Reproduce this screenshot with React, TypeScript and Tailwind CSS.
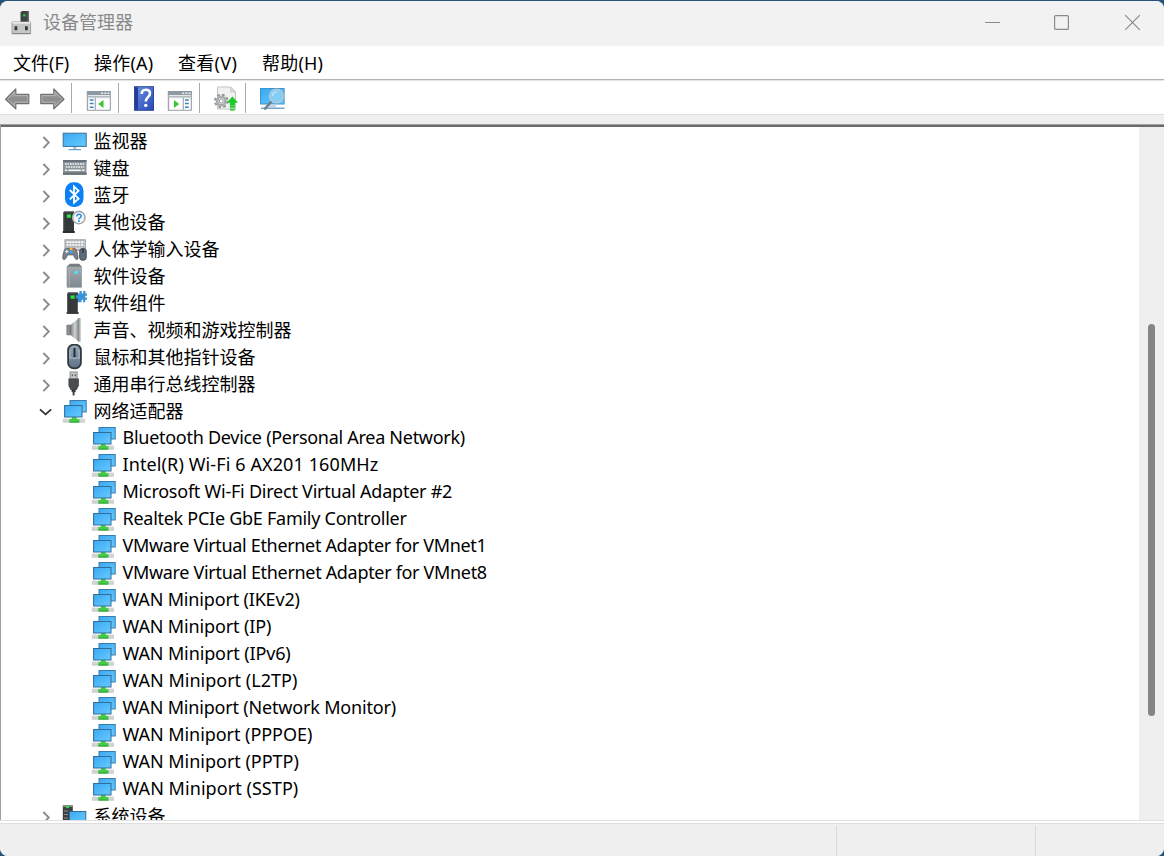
import React from "react";

type IconProps = { className?: string };

const Row = ({ children }: { children: React.ReactNode }) => (
  <svg width="26" height="27" viewBox="0 0 26 27" className="block shrink-0">
    {children}
  </svg>
);

const Defs = () => (
  <svg width="0" height="0" className="absolute">
    <defs>
      <linearGradient id="screen" x1="0" y1="0" x2="1" y2="1">
        <stop offset="0" stopColor="#3aa8f2" />
        <stop offset="1" stopColor="#66caff" />
      </linearGradient>
      <linearGradient id="steel" x1="0" y1="0" x2="0" y2="1">
        <stop offset="0" stopColor="#a9b0b4" />
        <stop offset="1" stopColor="#7d878d" />
      </linearGradient>
      <linearGradient id="arrow" x1="0" y1="0" x2="0" y2="1">
        <stop offset="0" stopColor="#b4b4b4" />
        <stop offset="0.5" stopColor="#8c8c8c" />
        <stop offset="1" stopColor="#a2a2a2" />
      </linearGradient>
      <linearGradient id="book" x1="0" y1="0" x2="1" y2="1">
        <stop offset="0" stopColor="#6f93e8" />
        <stop offset="1" stopColor="#2647b4" />
      </linearGradient>
      <linearGradient id="cone" x1="0" y1="0" x2="1" y2="0">
        <stop offset="0" stopColor="#6d7275" />
        <stop offset="0.55" stopColor="#cfd2d4" />
        <stop offset="1" stopColor="#8b9094" />
      </linearGradient>
      <linearGradient id="mouse" x1="0" y1="0" x2="0" y2="1">
        <stop offset="0" stopColor="#98a9b9" />
        <stop offset="1" stopColor="#5d7085" />
      </linearGradient>
    </defs>
  </svg>
);

const MonitorIcon = () => (
  <Row>
    <rect x="1.2" y="5.2" width="23" height="13.2" fill="url(#screen)" stroke="#3b6f98" />
    <path d="M11 19h3.5v2.2H11z" fill="#b7c4cd" />
    <path d="M6.5 21.7h12.5" stroke="#6ea5c8" strokeWidth="1.3" />
  </Row>
);

const KeyboardIcon = () => (
  <Row>
    <rect x="1" y="5" width="23.5" height="14.8" fill="#8b949a" />
    <path d="M1 5h23.5v2H1z" fill="#687178" />
    <path d="M1 17.6h23.5v2.2H1z" fill="#697177" />
    <path d="M3 9h19.5M3.8 12h18.4" stroke="#f5f6f6" strokeWidth="1.6" strokeDasharray="1.7 .8" />
    <path d="M3 15.2h2.2M6.4 15.2h12.5M20 15.2h2.5" stroke="#f5f6f6" strokeWidth="1.5" />
  </Row>
);

const BluetoothIcon = () => (
  <Row>
    <rect x="3" y="0.3" width="18.5" height="24.6" rx="8.5" fill="#0a82f5" />
    <path d="m7.8 8 8.8 8.6-4.6 4.1V4.6l4.6 4.1-8.8 8.6" fill="none" stroke="#fff" strokeWidth="1.8" />
  </Row>
);

const Tower = ({ x = 0 }: { x?: number }) => (
  <g transform={`translate(${x} 0)`}>
    <path d="M1.5 3.2 3 2h9v20.4H1.5z" fill="#36393b" />
    <path d="M1.5 3.2 3 2h9v1.2z" fill="#777b7d" />
    <path d="M1.7 3.4v18.8" stroke="#5b5f61" />
    <rect x="4.8" y="5.4" width="4" height="3.4" fill="#25e83a" />
    <path d="M.8 23h12" stroke="#2c2f30" strokeWidth="1.8" />
  </g>
);

const OtherIcon = () => (
  <Row>
    <Tower />
    <circle cx="16.8" cy="8.6" r="6.2" fill="#f5f8fa" stroke="#a3a9ad" strokeWidth="1.6" />
    <path d="M14.8 7.4c0-3 4.4-2.8 4.4-.3 0 1.9-2.3 1.6-2.3 3.4" fill="none" stroke="#2f8ed9" strokeWidth="1.6" />
    <rect x="16" y="11.4" width="1.8" height="1.6" fill="#2f8ed9" />
  </Row>
);

const HidIcon = () => (
  <Row>
    <rect x="2.9" y="3.7" width="20.6" height="10.8" fill="#b4b9bd" stroke="#9ba2a6" strokeWidth=".8" />
    <path d="M4.5 6.2h18M4.5 9h18" stroke="#fff" strokeWidth="1.7" strokeDasharray="2.1 .8" />
    <path d="M3.5 12.2h18" stroke="#e8eaec" />
    <path d="M4.4 12.3h7.9c2.7 0 3.9 8.2 3.7 10-.3 2.5-3 1.6-4.5-3.4H5.4c-1.3 5-4.1 5.8-4.6 3.4-.3-2 1.1-10 3.6-10z" fill="#75818b" stroke="#4b555e" strokeWidth=".7" />
    <path d="M3 15.5h3.6M4.8 13.7v3.6" stroke="#e3e7ea" strokeWidth="1.2" />
    <circle cx="9.2" cy="12.8" r="1.4" fill="#ffbd28" />
    <circle cx="11.8" cy="14.3" r="1.3" fill="#e26640" />
    <circle cx="9.2" cy="15.7" r="1.8" fill="#35a7ef" />
    <rect x="17.7" y="12.5" width="6.5" height="11.7" rx="2.6" fill="#5f6d7a" stroke="#424b53" />
    <path d="M21 13v4" stroke="#252c32" strokeWidth="1.2" />
  </Row>
);

const DeviceIcon = () => (
  <Row>
    <path d="M5 3.5 8 1h9l2.5 2.5v20.8H5z" fill="url(#steel)" stroke="#858d91" strokeWidth=".6" />
    <path d="M5 3.7 8 1h9l2.5 2.7z" fill="#747d82" />
    <path d="M7.3 4v20" stroke="#aeb6ba" strokeWidth=".8" />
    <path d="m14.3 7 2.1 2.2-2.1 2.3-2.2-2.3z" fill="#3ee7fa" />
  </Row>
);

const ComponentIcon = () => (
  <Row>
    <path d="M15 3.5h2.4V1h2.4v2.5h1.4V1h2.3v2.5H25v2.3h-1.8v1.6H25v2.4h-1.8v2.4h-2.1V9.8h-1.5v2.4H15z" fill="#3b93d5" />
    <Tower x={3.8} />
    <path d="M13.8 5.3h4v3.2h-4z" fill="#3b93d5" />
  </Row>
);

const SoundIcon = () => (
  <Row>
    <path d="M8 8.2 16.7 1.2v23.4L8 17.8z" fill="url(#cone)" />
    <path d="M4.9 8.2H8v9.6H4.9z" fill="#8d9295" stroke="#6c7174" strokeWidth=".8" />
    <path d="M16.4 1h2.2v23.8h-2.2z" fill="#a9aeb1" />
    <path d="M16.3 1.2v23.4" stroke="#7b8083" strokeWidth=".9" />
  </Row>
);

const MouseIcon = () => (
  <Row>
    <rect x="6.1" y="0.6" width="12.8" height="23.7" rx="5.6" fill="url(#mouse)" stroke="#33383d" strokeWidth="1.8" />
    <path d="M7.7 13.2c3 1.8 7 1.8 9.8 0M8 6v9M17.1 6v9" fill="none" stroke="#b7c5cf" strokeWidth=".8" />
    <path d="M12.5 4v9" stroke="#252a2e" strokeWidth="2" />
  </Row>
);

const UsbIcon = () => (
  <Row>
    <rect x="8.1" y="1" width="7" height="7" fill="#c9cccd" stroke="#85898b" />
    <path d="M9.7 3.3H11v2H9.7zM12.6 3.3h1.3v2h-1.3z" fill="#585c5e" />
    <path d="M6.4 7.5h10.5v7.2l-2.2 4.4H8.6l-2.2-4.4z" fill="#4a4d50" />
    <path d="M9.6 18.5h4v2.7h-4z" fill="#333638" />
    <path d="M11.6 20v4.4" stroke="#434648" strokeWidth="2" />
  </Row>
);

const NetworkIcon = () => (
  <Row>
    <rect x="8" y="2.5" width="16.2" height="11.5" fill="url(#screen)" stroke="#397baa" />
    <path d="M.8 20.6H23v3.9H.8z" fill="#d2d4d5" />
    <path d="M.8 24.1H23" stroke="#bfc1c2" strokeWidth=".6" />
    <path d="M10 18.5h4.6v2.3l2.9.4v3.4H7.2v-3.4l2.8-.4z" fill="#45cb45" />
    <path d="M7.5 24h9.7" stroke="#2f9f38" strokeWidth=".9" />
    <rect x="2.6" y="7.5" width="17.4" height="11.5" fill="url(#screen)" stroke="#306c9a" />
  </Row>
);

const SystemIcon = () => (
  <Row>
    <path d="M.8 2.3h10v20H.8z" fill="#3d4042" />
    <path d="M.8 2.3h10V4H.8z" fill="#8a8e90" />
    <path d="M4 3h3v2H4z" fill="#28df38" />
    <path d="M2 8h4M2 11.5h4M2 15h4" stroke="#8d9193" />
    <rect x="7.5" y="8.5" width="16.3" height="11" fill="url(#screen)" stroke="#356d98" />
  </Row>
);

const AppIcon = () => (
  <svg width="22" height="26" viewBox="0 0 22 26" className="block">
    <path d="M9.5 2.5 11 1h7v13H9.5z" fill="#3e4242" />
    <path d="M17.3 1v12" stroke="#686d6d" strokeWidth="1.5" />
    <rect x="12.2" y="4.2" width="2.2" height="2.2" fill="#33d442" />
    <path d="M1 12h18.6v11.8H1z" fill="#c5c6c6" stroke="#a1a3a3" />
    <path d="M1.3 12.9h18" stroke="#e6e6e6" strokeWidth="1.8" />
    <path d="M3.5 16.2h2.8v4H3.5zM14 16.2h2.8v4H14z" fill="#353939" />
    <path d="M1 23.5h18.6" stroke="#858888" />
  </svg>
);

const ArrowIcon = ({ flip = false, className = "" }: IconProps & { flip?: boolean }) => (
  <svg width="28" height="28" viewBox="0 0 28 28" className={className}>
    <g transform={flip ? "translate(28.6 0) scale(-1 1)" : undefined}>
      <path d="M2.6 15.2 12.8 5v5.3h13v9.3h-13v5.3z" fill="url(#arrow)" stroke="#6f6f6f" strokeWidth="1.2" strokeLinejoin="round" />
      <path d="M4.4 15.2 11.7 8v3.4h13v6.9h-13v3.8z" fill="none" stroke="#c2c2c2" strokeWidth=".7" />
    </g>
  </svg>
);

const PaneIcon = ({ right = false, className = "" }: IconProps & { right?: boolean }) => (
  <svg width="28" height="28" viewBox="0 0 28 28" className={className}>
    <rect x="2.3" y="7.5" width="23" height="18.7" fill="#e9eaeb" stroke="#8d959b" />
    <path d="M2.3 7.5h23v3.6h-23z" fill="#8c9aa5" />
    <path d="M16.2 9.2h2M19.3 9.2h2M22.4 9.2h2" stroke="#eef2f5" strokeWidth="1.4" />
    <path d="M2.8 12.7h22" stroke="#b3bac0" strokeWidth="1.5" />
    {right ? (
      <>
        <path d="M3.6 14.4h13v11h-13zM18 14.4h6.4v11H18z" fill="#fff" />
        <path d="M17.3 13.5v12" stroke="#9da5ab" />
        <path d="M19 16h3.8M19 19.6h3.8M19 23.2h3.8" stroke="#3b82c4" strokeWidth="1.5" />
        <path d="m8 16 5.2 4L8 24z" fill="#3fc332" />
      </>
    ) : (
      <>
        <path d="M3.6 14.4h6v11h-6zM11 14.4h13.5v11H11z" fill="#fff" />
        <path d="M10.3 13.5v12" stroke="#9da5ab" />
        <path d="M4.7 16h3.8M4.7 19.6h3.8M4.7 23.2h3.8" stroke="#3b82c4" strokeWidth="1.5" />
        <path d="m18.5 16-5.2 4 5.2 4z" fill="#3fc332" />
      </>
    )}
  </svg>
);

const HelpIcon = ({ className = "" }: IconProps) => (
  <svg width="28" height="28" viewBox="0 0 28 28" className={className}>
    <rect x="4.5" y="2.7" width="19" height="23.6" fill="url(#book)" stroke="#2e4897" />
    <path d="M5 3.2h3v22.6H5z" fill="#243d98" />
    <path d="M11.7 10c0-5.8 8.3-5.4 8.3-.8 0 4-4.2 3.8-4.2 8.3" fill="none" stroke="#fff" strokeWidth="2.6" />
    <circle cx="15.8" cy="21.4" r="1.7" fill="#fff" />
  </svg>
);

const UpdateIcon = ({ className = "" }: IconProps) => (
  <svg width="28" height="28" viewBox="0 0 28 28" className={className}>
    <path d="M5.5 3h13l5 5v17h-18z" fill="#f1f1f1" stroke="#c3c3c3" />
    <path d="M18.5 3v5h5z" fill="#ddd" stroke="#c3c3c3" strokeWidth=".7" />
    <circle cx="9.3" cy="17" r="6.3" fill="none" stroke="#8f9497" strokeWidth="2" strokeDasharray="2.6 2.35" />
    <circle cx="9.3" cy="17" r="4.2" fill="#ececec" stroke="#a7abad" strokeWidth="2.6" />
    <circle cx="9.3" cy="17" r="2" fill="#fff" stroke="#7b8082" strokeWidth=".8" />
    <path d="m20.4 12.5 5.8 6.3h-3.3v3h-5v-3h-3.3z" fill="#20ca2b" />
    <path d="M17.9 22.8h5M17.9 25.6h5" stroke="#20ca2b" strokeWidth="1.7" />
  </svg>
);

const ScanIcon = ({ className = "" }: IconProps) => (
  <svg width="28" height="28" viewBox="0 0 28 28" className={className}>
    <rect x="2.5" y="4.5" width="23.6" height="15.5" fill="url(#screen)" stroke="#3d94c9" />
    <path d="M11 20.5h7v3h-7z" fill="#c5d9e5" />
    <path d="M3 24.2h23.5" stroke="#75a9c9" strokeWidth="1.5" />
    <path d="m13.4 17.5-7 8" stroke="#6c7c87" strokeWidth="2.4" />
    <circle cx="18.5" cy="12" r="6.8" fill="#83cef5" stroke="#b4c9d5" strokeWidth="1.5" />
    <path d="M14.5 12c.2-2.7 1.7-4 4-4.2" fill="none" stroke="#c2e9fd" strokeWidth="1.3" />
  </svg>
);

const Chevron = ({ open = false }: { open?: boolean }) => (
  <svg width="16" height="27" viewBox="0 0 16 27" className="block shrink-0">
    {open ? (
      <path d="m2 11.3 5.6 5 5.6-5" fill="none" stroke="#333" strokeWidth="1.8" />
    ) : (
      <path d="m5.4 9 5.4 5.5-5.4 5.6" fill="none" stroke="#8c8c8c" strokeWidth="1.9" />
    )}
  </svg>
);

const Separator = ({ className = "" }: IconProps) => (
  <div className={`mt-0.5 h-[30px] w-px bg-[#a9a9a9] ${className}`} />
);

const categories = [
  { label: "监视器", Icon: MonitorIcon },
  { label: "键盘", Icon: KeyboardIcon },
  { label: "蓝牙", Icon: BluetoothIcon },
  { label: "其他设备", Icon: OtherIcon },
  { label: "人体学输入设备", Icon: HidIcon },
  { label: "软件设备", Icon: DeviceIcon },
  { label: "软件组件", Icon: ComponentIcon },
  { label: "声音、视频和游戏控制器", Icon: SoundIcon },
  { label: "鼠标和其他指针设备", Icon: MouseIcon },
  { label: "通用串行总线控制器", Icon: UsbIcon },
  { label: "网络适配器", Icon: NetworkIcon, open: true },
];

const adapters = [
  { label: "Bluetooth Device (Personal Area Network)", tracking: "tracking-[-0.28px]" },
  { label: "Intel(R) Wi-Fi 6 AX201 160MHz", tracking: "tracking-[0.11px]" },
  { label: "Microsoft Wi-Fi Direct Virtual Adapter #2", tracking: "tracking-[-0.24px]" },
  { label: "Realtek PCIe GbE Family Controller", tracking: "tracking-[-0.27px]" },
  { label: "VMware Virtual Ethernet Adapter for VMnet1", tracking: "tracking-[-0.33px]" },
  { label: "VMware Virtual Ethernet Adapter for VMnet8", tracking: "tracking-[-0.32px]" },
  { label: "WAN Miniport (IKEv2)", tracking: "tracking-[-0.17px]" },
  { label: "WAN Miniport (IP)", tracking: "tracking-[-0.13px]" },
  { label: "WAN Miniport (IPv6)", tracking: "tracking-[-0.12px]" },
  { label: "WAN Miniport (L2TP)", tracking: "tracking-[0.01px]" },
  { label: "WAN Miniport (Network Monitor)", tracking: "tracking-[-0.18px]" },
  { label: "WAN Miniport (PPPOE)", tracking: "tracking-[-0.05px]" },
  { label: "WAN Miniport (PPTP)", tracking: "tracking-[-0.02px]" },
  { label: "WAN Miniport (SSTP)", tracking: "tracking-[0.06px]" },
];

const Category = ({ label, Icon, open }: { label: string; Icon: () => React.ReactElement; open?: boolean }) => (
  <li className="flex h-[27px] items-center pl-[37px]">
    <Chevron open={open} />
    <span className="ml-2">
      <Icon />
    </span>
    <span className="ml-[5.5px]">{label}</span>
  </li>
);

export default function App() {
  return (
    <div className="h-[856px] w-[1164px] overflow-hidden bg-[#24547c] pt-px font-['Noto_Sans','Noto_Sans_CJK_SC',sans-serif] text-[18px] leading-[27px] whitespace-nowrap text-black">
      <Defs />
      <div className="flex h-[855px] flex-col overflow-hidden rounded-lg bg-[#efefef]">
        <header className="flex h-[45px] shrink-0 items-center bg-[#f2f2f2] pb-0.5 pl-[11px] text-[#8a8a8a]">
          <AppIcon />
          <h1 className="ml-2.5">设备管理器</h1>
          <div className="mr-[23px] ml-auto flex items-center">
            <svg width="17" height="17" viewBox="0 0 17 17">
              <path d="M1 8.5h15" stroke="#8b8b8b" />
            </svg>
            <svg width="17" height="17" viewBox="0 0 17 17" className="ml-[52px]">
              <rect x="1.6" y="1.6" width="13.8" height="13.8" rx="1" fill="none" stroke="#8b8b8b" strokeWidth="1.2" />
            </svg>
            <svg width="17" height="17" viewBox="0 0 17 17" className="ml-[54px]">
              <path d="m1.2 1.2 14.6 14.6m0-14.6L1.2 15.8" stroke="#8b8b8b" strokeWidth="1.2" />
            </svg>
          </div>
        </header>
        <nav className="flex h-[33px] shrink-0 items-center bg-white pt-0.5 pl-[13px]">
          <span className="w-[81px]">文件(F)</span>
          <span className="w-[84px] tracking-[0.2px]">操作(A)</span>
          <span className="w-[84px] tracking-[0.3px]">查看(V)</span>
          <span className="tracking-[0.2px]">帮助(H)</span>
        </nav>
        <div className="h-0.5 shrink-0 border-t border-[#b3b3b5] bg-[#e4e4e9]" />
        <div className="flex h-[33px] shrink-0 items-start bg-white">
          <ArrowIcon className="mt-[3px] ml-[3px]" />
          <ArrowIcon flip className="mt-[3px] ml-[7px]" />
          <Separator className="ml-[5px]" />
          <PaneIcon className="mt-[3px] ml-[13px]" />
          <Separator className="ml-[5px]" />
          <HelpIcon className="mt-[3px] ml-[11px]" />
          <PaneIcon right className="mt-[3px] ml-[7.5px]" />
          <Separator className="ml-[5.5px]" />
          <UpdateIcon className="mt-[3px] ml-[12px]" />
          <Separator className="ml-[5px]" />
          <ScanIcon className="mt-[3px] ml-[12px]" />
        </div>
        <div className="h-[10px] shrink-0 border-t border-[#dedede] bg-[#efefef]" />
        <main className="flex h-[696px] shrink-0 overflow-hidden border-t border-l border-[#a0a0a0] bg-white">
          <div className="flex w-full border-t-2 border-[#6b6b6b]">
            <ul className="flex-1 pt-px">
              {categories.map((c) => (
                <Category key={c.label} {...c} />
              ))}
              {adapters.map((a) => (
                <li key={a.label} className="flex h-[27px] items-center pl-[89.5px]">
                  <NetworkIcon />
                  <span className={`ml-[6px] pb-0.5 ${a.tracking}`}>{a.label}</span>
                </li>
              ))}
              <Category label="系统设备" Icon={SystemIcon} />
            </ul>
            <div className="w-[25px] bg-[#efefef] pt-[197px] pl-2.25">
              <div className="h-[392px] w-[7px] rounded-full bg-[#858585]" />
            </div>
          </div>
        </main>
        <footer className="flex h-[36px] shrink-0 flex-col border-t border-[#e0e0e0] bg-[#efefef]">
          <div className="h-[3px] shrink-0 border-b border-[#dedede] bg-white" />
          <div className="flex flex-1 pt-0.5">
            <div className="w-[837px] border-r border-[#dadada]" />
            <div className="w-[199px] border-r border-[#dadada]" />
            <div className="flex-1" />
          </div>
        </footer>
      </div>
    </div>
  );
}
